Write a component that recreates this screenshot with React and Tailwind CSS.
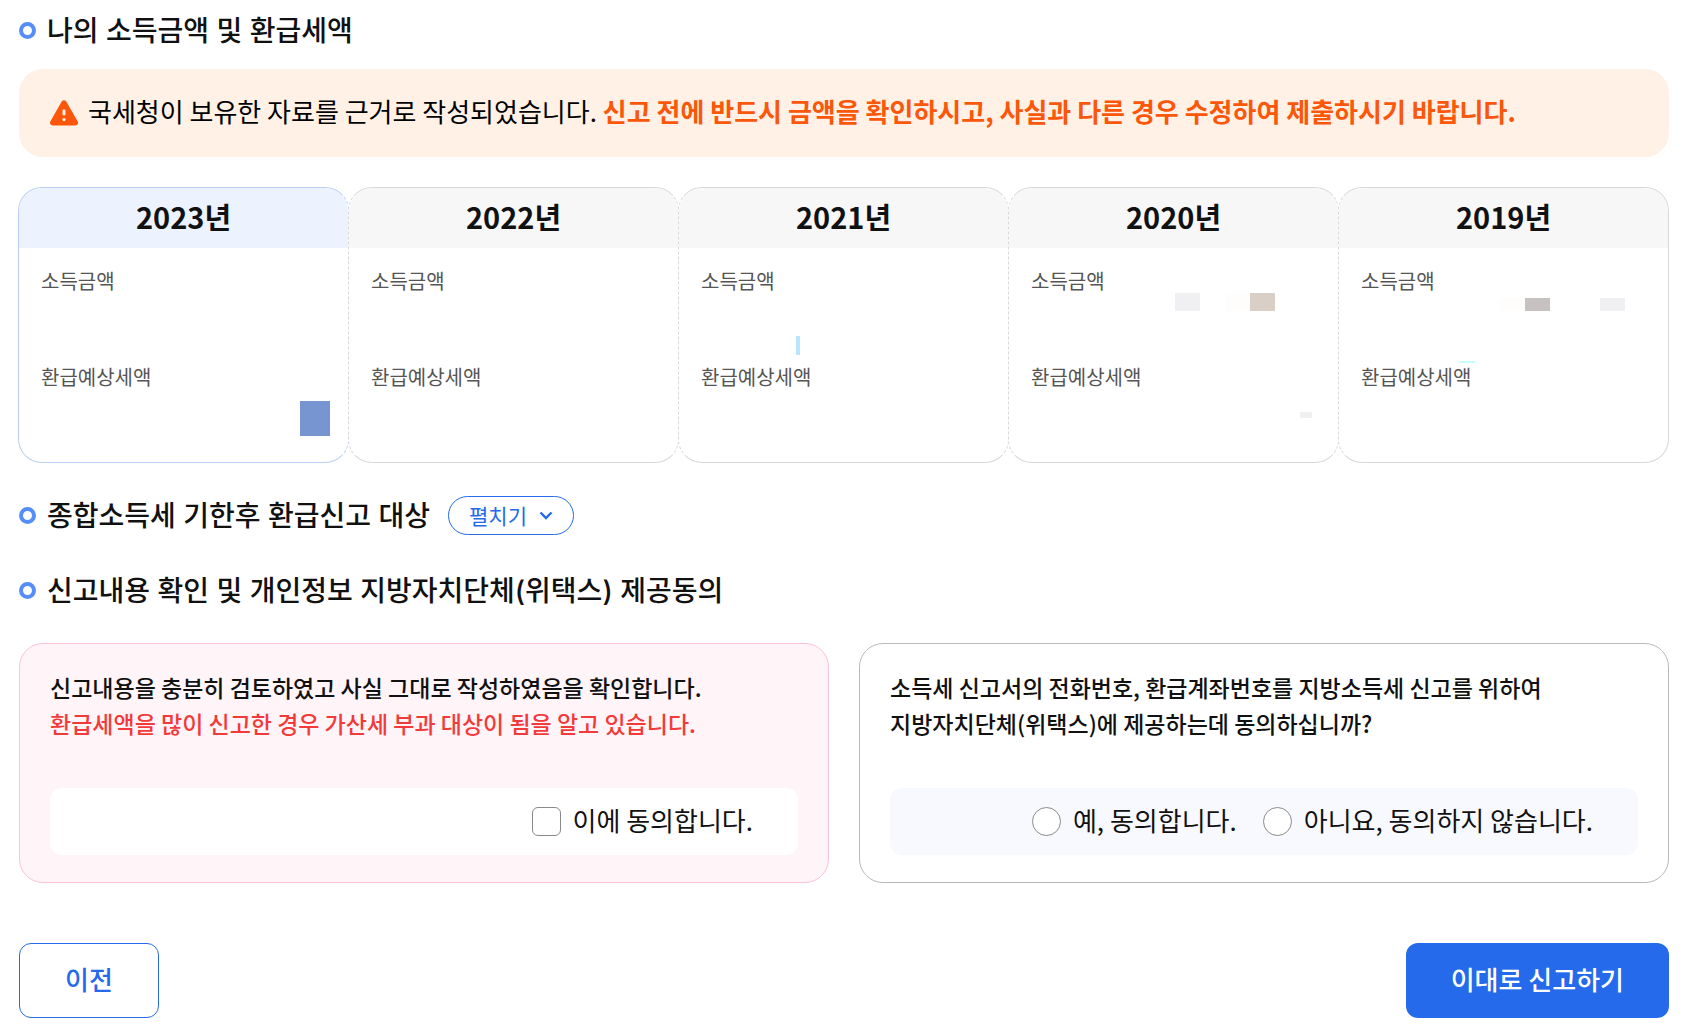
import { useState } from "react";
import clsx from "clsx";

// Masked amounts are drawn as blocks over the card body.
const YEARS = [
  {
    year: 2023,
    marks: ["left-[281px] top-[213px] h-[35px] w-[30px] bg-[#7796d1]"],
  },
  { year: 2022, marks: [] },
  {
    year: 2021,
    marks: ["left-[117px] top-[148px] h-[19px] w-1 bg-[#b8e6ff]"],
  },
  {
    year: 2020,
    marks: [
      "left-[166px] top-[105px] h-[18px] w-[25px] bg-[#f0eff2]",
      "left-[216px] top-[105px] h-[18px] w-[25px] bg-[#fefdfc]",
      "left-[241px] top-[105px] h-[18px] w-[25px] bg-[#d9cfc6]",
      "left-[291px] top-[224px] h-[6px] w-[12px] bg-[#f0eff2]",
    ],
  },
  {
    year: 2019,
    marks: [
      "left-[161px] top-[110px] h-[13px] w-[25px] bg-[#fefdfc]",
      "left-[186px] top-[110px] h-[13px] w-[25px] bg-[#c7c1c1]",
      "left-[261px] top-[110px] h-[13px] w-[25px] bg-[#f0eff2]",
      "left-[120px] top-[173px] h-[2px] w-4 bg-[#c5ffff]",
    ],
  },
];

function SectionTitle({ children }) {
  return (
    <div className="flex items-center gap-[11px]">
      <span className="h-[17px] w-[17px] shrink-0 rounded-full border-4 border-[#558ef8]" />
      <h2 className="pt-px font-['Inter','Noto_Sans_CJK_KR',sans-serif] text-[28px] leading-10 font-medium">
        {children}
      </h2>
    </div>
  );
}

function WarningIcon() {
  return (
    <svg viewBox="0 0 30 30" className="h-[30px] w-[30px] shrink-0" aria-hidden="true">
      <path
        d="M12.7 3.6a2.7 2.7 0 0 1 4.6 0l11.4 19.9a2.6 2.6 0 0 1-2.3 3.9H3.6a2.6 2.6 0 0 1-2.3-3.9z"
        fill="#fa570a"
      />
      <path d="M15 12.8v3.2" stroke="#fff1e6" strokeWidth="3" strokeLinecap="round" />
      <circle cx="15" cy="21.6" r="1.6" fill="#fff1e6" />
    </svg>
  );
}

function YearCard({ year, marks, first, last }) {
  return (
    <li
      className={clsx(
        "relative -ml-px h-[276px] overflow-hidden rounded-3xl border bg-white",
        first ? "border-[#b9cff3]" : "border-[#d8d8d8] [border-left-style:dashed]",
        !last && "[border-right-style:dashed]"
      )}
    >
      <h3
        className={clsx(
          "flex h-[60px] items-center justify-center pb-1 text-[29px] leading-10 font-bold",
          first ? "bg-[#ecf3ff]" : "bg-[#f7f7f7]"
        )}
      >
        {year}년
      </h3>
      <dl className="px-[22px] pt-[17px] text-xl leading-8 text-[#555]">
        <dt>소득금액</dt>
        <dd className="h-16" />
        <dt>환급예상세액</dt>
        <dd className="h-16" />
      </dl>
      {marks.map((mark) => (
        <span key={mark} className={clsx("absolute", mark)} />
      ))}
    </li>
  );
}

function Choice({ type, name, label, checked, onChange }) {
  return (
    <label className="flex items-center gap-3 text-[26px] leading-9">
      <input
        type={type}
        name={name}
        checked={checked}
        onChange={onChange}
        className={clsx(
          "h-[29px] w-[29px] appearance-none border border-[#8a8a8a] bg-white checked:border-8 checked:border-[#256aea]",
          type === "radio" ? "rounded-full" : "rounded-md"
        )}
      />
      <span className="pb-1">{label}</span>
    </label>
  );
}

export default function App() {
  const [open, setOpen] = useState(false);
  const [agreed, setAgreed] = useState(false);
  const [provide, setProvide] = useState(null);

  return (
    <main className="bg-white pt-[10px] pr-[38px] pb-[18px] pl-[19px] font-['Noto_Sans_CJK_KR',sans-serif] text-[#111]">
      <SectionTitle>나의 소득금액 및 환급세액</SectionTitle>

      {/* Notice */}
      <div className="mt-[18px] flex h-[88px] items-center gap-[9px] rounded-3xl bg-[#fff1e6] px-[30px]">
        <WarningIcon />
        <p className="pb-1 text-[26px] leading-9 text-black">
          국세청이 보유한 자료를 근거로 작성되었습니다.{" "}
          <strong className="font-bold text-[#fa570a]">
            신고 전에 반드시 금액을 확인하시고, 사실과 다른 경우 수정하여 제출하시기 바랍니다.
          </strong>
        </p>
      </div>

      {/* Income and refund by year */}
      <ul className="mt-[30px] grid grid-cols-5">
        {YEARS.map((item, i) => (
          <YearCard
            key={item.year}
            year={item.year}
            marks={item.marks}
            first={i === 0}
            last={i === YEARS.length - 1}
          />
        ))}
      </ul>

      <div className="mt-8 flex items-center gap-[18px]">
        <SectionTitle>종합소득세 기한후 환급신고 대상</SectionTitle>
        <button
          type="button"
          aria-expanded={open}
          onClick={() => setOpen(!open)}
          className="flex h-[39px] items-center gap-3 rounded-full border border-[#256aea] px-5 text-[21px] leading-8 text-[#256aea]"
        >
          <span className="pb-[2px]">펼치기</span>
          <svg viewBox="0 0 14 10" className="h-[10px] w-[14px]" fill="none" aria-hidden="true">
            <path d="M1.5 1.5 7 7l5.5-5.5" stroke="currentColor" strokeWidth="2.4" />
          </svg>
        </button>
      </div>

      <div className="mt-[34px]">
        <SectionTitle>신고내용 확인 및 개인정보 지방자치단체(위택스) 제공동의</SectionTitle>
      </div>

      {/* Consent boxes */}
      <div className="mt-8 grid grid-cols-2 gap-[30px]">
        <section className="rounded-3xl border border-[#f9c4d6] bg-[#fff4f8] px-[30px] pt-[25px] pb-[27px]">
          <p className="text-[23px] leading-9 font-medium">
            신고내용을 충분히 검토하였고 사실 그대로 작성하였음을 확인합니다.
            <br />
            <span className="text-[#f23a3a]">
              환급세액을 많이 신고한 경우 가산세 부과 대상이 됨을 알고 있습니다.
            </span>
          </p>
          <div className="mt-[47px] flex h-[67px] items-center justify-end rounded-xl bg-white px-[45px]">
            <Choice
              type="checkbox"
              name="confirm"
              label="이에 동의합니다."
              checked={agreed}
              onChange={(e) => setAgreed(e.target.checked)}
            />
          </div>
        </section>

        <section className="rounded-3xl border border-[#b9b9b9] bg-white px-[30px] pt-[25px] pb-[27px]">
          <p className="text-[23px] leading-9 font-medium">
            소득세 신고서의 전화번호, 환급계좌번호를 지방소득세 신고를 위하여
            <br />
            지방자치단체(위택스)에 제공하는데 동의하십니까?
          </p>
          <div className="mt-[47px] flex h-[67px] items-center justify-end gap-[26px] rounded-xl bg-[#f8f9fe] px-[45px]">
            <Choice
              type="radio"
              name="wetax"
              label="예, 동의합니다."
              checked={provide === true}
              onChange={() => setProvide(true)}
            />
            <Choice
              type="radio"
              name="wetax"
              label="아니요, 동의하지 않습니다."
              checked={provide === false}
              onChange={() => setProvide(false)}
            />
          </div>
        </section>
      </div>

      {/* Actions */}
      <div className="mt-[60px] flex justify-between text-[26px] leading-9 font-medium">
        <button
          type="button"
          className="h-[75px] rounded-xl border border-[#256aea] bg-white px-[45px] pb-1 text-[#256aea]"
        >
          이전
        </button>
        <button
          type="button"
          className="h-[75px] rounded-xl bg-[#256aea] px-[45px] pb-1 text-white"
        >
          이대로 신고하기
        </button>
      </div>
    </main>
  );
}
